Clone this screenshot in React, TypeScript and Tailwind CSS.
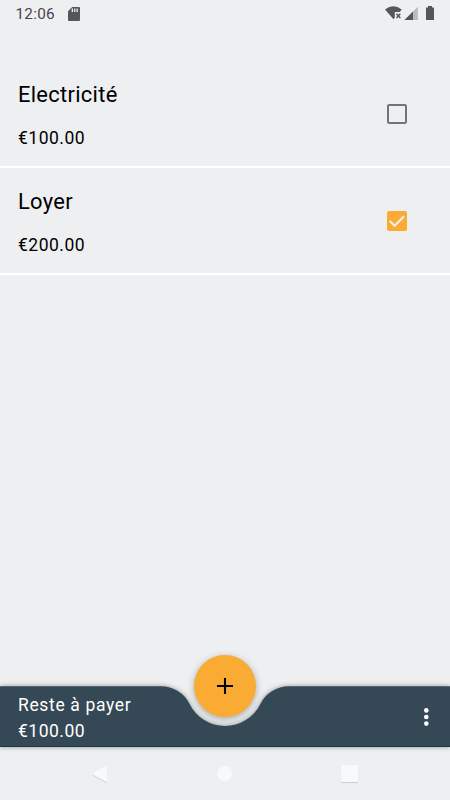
import React, { useState } from "react";

interface Bill {
  id: number;
  label: string;
  amount: number;
  paid: boolean;
}

const INITIAL_BILLS: Bill[] = [
  { id: 1, label: "Electricité", amount: 100, paid: false },
  { id: 2, label: "Loyer", amount: 200, paid: true },
];

const formatAmount = (value: number) => `€${value.toFixed(2)}`;

const StatusBar = () => (
  <div className="flex h-7 shrink-0 items-center justify-between pl-[15.5px] pr-[15px] text-[#454648]">
    <div className="flex items-center">
      <span className="text-[15.3px] leading-7 tracking-[0.25px]">12:06</span>
      <svg className="-mt-px ml-[13px]" width="12" height="14" viewBox="0 0 12 14">
        <path
          fill="#555658"
          fillRule="evenodd"
          d="M4.2 0H11Q12 0 12 1V13Q12 14 11 14H1Q0 14 0 13V4.2ZM3.7 1.6V5H5V1.6ZM6.1 1.6V5H7.4V1.6ZM8.5 1.6V5H9.8V1.6Z"
        />
      </svg>
    </div>
    <svg width="50" height="16" viewBox="0 0 50 16">
      {/* wifi */}
      <path fill="#555658" d="M0 3.5Q8.3-2.8 16.7 3.5L14.8 6H9.8V11.6L8.5 13.2Z" />
      <path stroke="#555658" strokeWidth="1.5" d="M11.5 7.8L15.3 12M15.3 7.8L11.5 12" />
      {/* signal */}
      <path fill="#b9babc" d="M32.8 0.8V14H19.5Z" />
      <path fill="#555658" d="M28 5.6V14H19.5Z" />
      {/* battery */}
      <path fill="#555658" d="M43 0H47V1.4H49V14H41V1.4H43Z" />
    </svg>
  </div>
);

const Checkbox = ({ checked, onChange }: { checked: boolean; onChange: () => void }) => (
  <button role="checkbox" aria-checked={checked} onClick={onChange} className="mb-[0.8px] size-5">
    <svg width="20" height="20" viewBox="0 0 20 20" fill="none">
      {checked ? (
        <>
          <rect width="20" height="20" rx="2" fill="#faab33" />
          <path d="M2.8 10L7.6 14.7L17 5.3" stroke="#eeeff1" strokeWidth="2.2" />
        </>
      ) : (
        <rect x="1" y="1" width="18" height="18" rx="1.2" stroke="#727375" strokeWidth="2" />
      )}
    </svg>
  </button>
);

const BillRow = ({ bill, onToggle }: { bill: Bill; onToggle: () => void }) => (
  <div className="flex h-[106.5px] items-center justify-between bg-[linear-gradient(to_top,#fff_1.6px,transparent_1.6px)] pl-[18px] pr-[42.6px] text-black">
    <div className="mt-0.5">
      <p className="text-[21.9px] leading-[26px] tracking-[0.3px]">{bill.label}</p>
      <p className="mt-[19px] text-[17.5px] leading-[22px] tracking-[0.5px]">
        {formatAmount(bill.amount)}
      </p>
    </div>
    <Checkbox checked={bill.paid} onChange={onToggle} />
  </div>
);

const BottomBar = ({ remaining }: { remaining: number }) => (
  <div className="relative h-[61px] shrink-0">
    {/* bar background with the cradle for the add button */}
    <svg
      className="absolute inset-0 overflow-visible drop-shadow-[0_0px_2.5px_rgba(0,0,0,0.4)]"
      width="450"
      height="61"
      viewBox="0 0 450 61"
    >
      <path
        fill="#344955"
        d="M0 0.3H161A32 32 0 0 1 189.6 18A39.5 39.5 0 0 0 260.4 18A32 32 0 0 1 289 0.3H450V61H0Z"
      />
      <path fill="#12384a" d="M0 60H450V61H0Z" />
    </svg>
    <button className="absolute left-[194px] top-[-31px] flex size-[62px] items-center justify-center rounded-full bg-[#faab33] shadow-[0_2px_7px_rgba(0,0,0,0.3)]">
      <svg width="16" height="16" viewBox="0 0 16 16">
        <path d="M8 0V16M0 8H16" stroke="#000" strokeWidth="2.1" />
      </svg>
    </button>
    <div className="relative flex h-full items-center justify-between pl-[18px] pr-[21.5px] text-white">
      <div className="mt-0.5 text-[17.5px] leading-[26px]">
        <p className="tracking-[0.65px]">Reste à payer</p>
        <p className="tracking-[0.5px]">{formatAmount(remaining)}</p>
      </div>
      <svg width="5" height="18" viewBox="0 0 5 18" fill="#fff">
        <circle cx="2.3" cy="2.4" r="2.3" />
        <circle cx="2.3" cy="9" r="2.3" />
        <circle cx="2.3" cy="15.6" r="2.3" />
      </svg>
    </div>
  </div>
);

const NavigationBar = () => (
  <div className="flex h-[53px] shrink-0 items-center justify-between bg-[#eeeff1] pl-[91px] pr-[92.5px]">
    <svg
      className="drop-shadow-[0_1px_0.5px_rgba(0,0,0,0.12)]"
      width="16"
      height="18"
      viewBox="0 0 16 18"
    >
      <path d="M16 0.5V17.3L0.5 9Z" fill="#f8f9fb" />
    </svg>
    <div className="ml-px size-[15.5px] rounded-full bg-[#f8f9fb]" />
    <div className="size-[16.5px] rounded-[1px] bg-[#f8f9fb] shadow-[0_1px_1px_rgba(0,0,0,0.15)]" />
  </div>
);

export default function App() {
  const [bills, setBills] = useState<Bill[]>(INITIAL_BILLS);

  const toggleBill = (id: number) =>
    setBills((prev) => prev.map((b) => (b.id === id ? { ...b, paid: !b.paid } : b)));

  const remaining = bills.filter((b) => !b.paid).reduce((sum, b) => sum + b.amount, 0);

  return (
    <div className="flex h-[800px] w-[450px] flex-col overflow-hidden bg-[#eeeff1] font-['Roboto',sans-serif]">
      <StatusBar />
      <div className="flex-1 pt-[33.5px]">
        {bills.map((bill) => (
          <BillRow key={bill.id} bill={bill} onToggle={() => toggleBill(bill.id)} />
        ))}
      </div>
      <BottomBar remaining={remaining} />
      <NavigationBar />
    </div>
  );
}
